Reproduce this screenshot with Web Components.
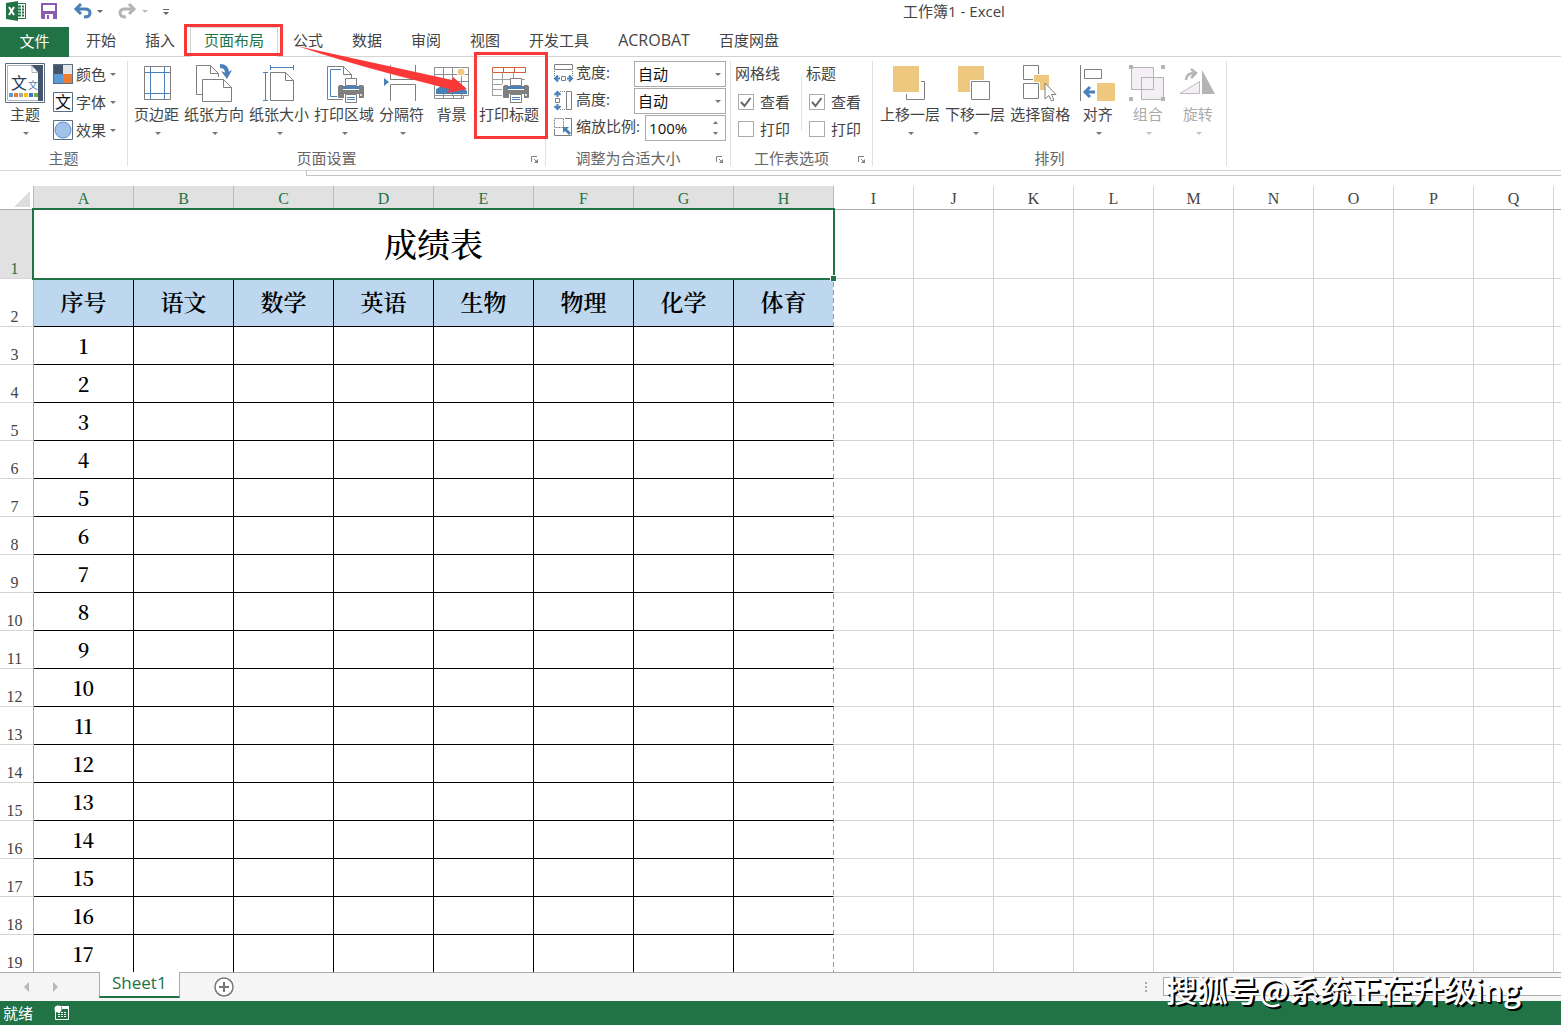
<!DOCTYPE html>
<html lang="zh-CN">
<head>
<meta charset="utf-8">
<title>工作簿1 - Excel</title>
<style>
html,body{margin:0;height:100%}
body{font:15px/20px "Open Sans","Noto Sans CJK SC",sans-serif;color:#444;background:#fff;overflow:hidden}
</style>
</head>
<body>
<excel-app></excel-app>
<script>
const define = (name, css, html, setup) => customElements.define(name, class extends HTMLElement {
  connectedCallback() {
    if (this.shadowRoot) return;
    const root = this.attachShadow({ mode: 'open' });
    root.innerHTML = `<style>*{box-sizing:border-box}button,input,select{font:inherit;color:inherit;margin:0}button{border:0;background:none;padding:0;cursor:default;white-space:nowrap}${css}</style>` +
      (typeof html === 'function' ? html(this) : html);
    if (setup) setup(this, root);
  }
});

const G = '#7f7f7f', B = '#4a80b8', Y = '#edc87e';
const line = (d, c = G, extra = '') => `<path d="${d}" fill="none" stroke="${c}" ${extra}/>`;
const fill = (d, c) => `<path d="${d}" fill="${c}"/>`;
const printer = `<path d="M13 21h28v14h-5v6h-17v-6h-6z" fill="#fff"/>
  <path d="M16 22h22q2 0 2 2v10q0 1-1 1H15q-1 0-1-1V24q0-2 2-2z" fill="${G}"/>
  <path d="M19 21h16v6H19z" fill="#fff"/><path d="M19 23h16v3H19z" fill="${B}"/>
  <path d="M21.500 15.500h11v7h-11z" fill="#fff" stroke="${G}"/><path d="M20 31h15v4H20z" fill="#fff"/>
  <path d="M21.500 31.500h11v8h-11z" fill="#fff" stroke="${G}"/>${line('M23 34.500h8M23 36.500h8', B)}
  <circle cx="37" cy="32" r="1" fill="#fff"/>`;
const page = (x, y, r, b) => `<path d="M${x} ${y}H${r - 8}L${r} ${y + 8}V${b}H${x}Z" fill="#fff" stroke="${G}"/>` + line(`M${r - 8} ${y}V${y + 8}H${r}`);

const ICONS = {
  theme: [40, 40, `<path d="M.5.5h39v39H.5z" fill="#fff" stroke="#5b6b82"/><path d="M2.500 37.500V2.500H27l7 8v27z" fill="#fff" stroke="#aab4c2"/><path d="M26 2H38V38H33V10Z" fill="#44546a"/><path d="M27 3V9.500H33Z" fill="#fff" stroke="#aab4c2"/>
    <text x="6" y="26" font-size="16" fill="#2c405c">文</text><text x="23" y="26" font-size="10" fill="${B}">文</text>
    ${['#5b9bd5', '#ed7d31', '#a5a5a5', '#ffc000', '#4472c4', '#70ad47'].map((c, i) => `<path d="M${4 + i * 5} 30h4v4h-4z" fill="${c}"/>`).join('')}`],
  colors: [20, 20, `<path d="M0 0h20v20H0z" fill="#5b6b82"/><path d="M1 1h9v9H1z" fill="#44546a"/><path d="M10 1h9v9h-9z" fill="#e7e6e6"/><path d="M1 10h9v9H1z" fill="#5b9bd5"/><path d="M10 10h9v9h-9z" fill="#ed7d31"/>`],
  fonts: [20, 20, `<path d="M.5.5h19v19H.5z" fill="#fff" stroke="#5b6b82"/><text x="2" y="16" font-size="16" fill="#111">文</text>`],
  effects: [20, 20, `<path d="M.5.5h19v19H.5z" fill="#fff" stroke="#5b6b82"/><circle cx="10" cy="10" r="8" fill="#a3c2ea" stroke="#5b93d3"/>`],
  margins: [41, 40, line('M8.500 3.500h26v33h-26z') + line('M14.500 4v32M28.500 4v32M9 9.500h25M9 30.500h25', B)],
  orient: [40, 40, line('M8 31.500H2.500V2.500H16.500L24.500 10.500V14M16.500 2.500V10.500H24.500') + page(8.5, 16.5, 37.5, 38.5) + line('M26 3Q33 3 33 10', B, 'stroke-width="4"') + fill('M27 8L32 10L38 7L33 16Z', B)],
  size: [40, 40, page(11.5, 9.5, 34.5, 37.5) + line('M11.500 2v5M34.500 2v5M12 4.500h22M4 9.500h5M4 37.500h5M6.500 10v27', B)],
  area: [40, 40, page(3.5, 3.5, 27.5, 36.5) + line('M17 6.500H6.500V33.500H14', B) + printer],
  breaks: [41, 40, line('M9.500 2V16.500H34.500V2M9.500 38V21.500H34.500V38') + fill('M3 15L8 19L3 23Z', B)],
  backg: [41, 40, line('M3.500 4.500h34v28h-34zM12.500 5v28M21.500 5v28M30.500 5v30M4 11.500h34M4 18.500h34M3.500 32.500v3h29v-3M12.500 32v3M22.500 32v3', '#8e8e8e') + fill('M5 31V26Q11 24 12 18Q16 15 20 18Q22 15 26 19L36 28V31Z', B) + `<circle cx="30" cy="9" r="4" fill="${Y}" stroke="#fff"/>`],
  titles: [40, 40, line('M3.500 10V33M13.500 10V33M24.500 10V16M4 16.500h32M4 21.500h18M4 26.500h12M4 32.500h12', '#a0a0a0') + line('M3.500 9.500V4.500H36.500V9.500ZM14.500 5v4M25.500 5v4', '#d0603c') + printer],
  forward: [40, 40, line('M16.500 18.500h18v18h-18z') + `<path d="M2 2h29v29H2z" fill="#fff"/>` + fill('M3 3h26v26H3z', Y)],
  backward: [40, 40, fill('M3 3h26v26H3z', Y) + `<path d="M15 17h21v21H15z" fill="#fff"/>` + line('M16.500 18.500h18v18h-18z')],
  pane: [40, 40, line('M3.500 2.500h15v14h-15z') + `<path d="M13 11h17v17H13z" fill="#fff"/>` + fill('M14 12h15v15H14z', Y) + `<path d="M2 19h18v18H2z" fill="#fff"/>` + line('M3.500 20.500h15v15h-15z') + `<path d="M25 20V36L29 32.500L31.500 38L34 37L31.500 31.500H36Z" fill="#fff" stroke="${G}"/>`],
  align: [41, 40, line('M3.500 2V38M7.500 6.500h17v9h-17z') + fill('M20 20h18v18H20z', Y) + line('M18 29H8M13 24L8 29L13 34', B, 'stroke-width="3"')],
  group: [41, 40, `<path d="M4.500 4.500h22v22h-22zM14.500 14.500h22v22h-22z" fill="#f4eff4" stroke="#b4b4b4"/>` + line('M14.500 26V14.500H26M26.500 14V26.500H14', '#b4b4b4') + fill('M2 2h4v4H2zM34 2h4v4h-4zM2 34h4v4H2zM34 34h4v4h-4z', '#b4b4b4')],
  rotate: [41, 40, `<path d="M3 30.500H22.500V18.500Z" fill="#f4eff4" stroke="#bbb"/>` + fill('M25 7V31H38Z', '#b4b4b4') + line('M9 17Q9 10 18 10M14 6L19 10L14 15', '#b4b4b4', 'stroke-width="2.5"')],
  width: [20, 20, line('M1.500 1.500h18v5h-18z') + line('M1.500 8v6M19.500 8v6', G, 'stroke-dasharray="1 1"') + line('M8.500 13.500h4v4h-4z') + line('M7 15.500H2M5 12.500L2 15.500L5 18.500M14 15.500H19M16 12.500L19 15.500L16 18.500', B, 'stroke-width="2"')],
  height: [20, 20, line('M13.500 1.500h5v18h-5z') + line('M7 1.500h5M7 19.500h5', G, 'stroke-dasharray="1 1"') + line('M2.500 8.500h4v4h-4z') + line('M4.500 7V2M1.500 5L4.500 2L7.500 5M4.500 14V19M1.500 16L4.500 19L7.500 16', B, 'stroke-width="2"')],
  scale: [20, 20, line('M1.500 1.500h9v9h-9z', G, 'stroke-dasharray="2 1"') + line('M12 1.500H18.500V18.500H1.500V12') + fill('M10 10H16L14 12L18 16L16 18L12 14L10 16Z', B)],
  caret: [6, 3, fill('M0 0H6L3 3Z', 'currentColor')],
  up: [5, 3, fill('M0 3H5L2.500 0Z', 'currentColor')],
  down: [5, 3, fill('M0 0H5L2.500 3Z', 'currentColor')],
  launch: [8, 8, line('M.5 6V.5H6M3 3L6 6', G) + fill('M7 3V7H3Z', G)],
  tick: [16, 16, line('M3 8L6.500 12L12.500 4', '#666', 'stroke-width="2"')],
  excel: [20, 20, `<path d="M11 2.500h8.500v15H11z" fill="#fff" stroke="#217346"/>` + line('M12 5.500h6M12 8.500h6M12 11.500h6M12 14.500h6', '#217346', 'stroke-width="2" stroke-dasharray="3 1"') + fill('M0 2L12 0V20L0 18Z', '#217346') + line('M3 6L8 14M8 6L3 14', '#fff', 'stroke-width="2"')],
  save: [16, 16, fill('M0 0H16V16H1L0 15Z', '#8a5bb0') + fill('M2 2h12v6H2zM4 11h8v5H4z', '#fff') + fill('M6 12h2v4H6z', '#8a5bb0')],
  undo: [19, 16, line('M3 6H12Q17 6 17 10Q17 14 11 14', B, 'stroke-width="3"') + line('M8 1L3 6L8 11', B, 'stroke-width="3"')],
  redo: [19, 16, line('M16 6H7Q2 6 2 10Q2 14 8 14', '#b4b4b4', 'stroke-width="3"') + line('M11 1L16 6L11 11', '#b4b4b4', 'stroke-width="3"')],
  custom: [6, 7, line('M0 1.500H6', '#666') + fill('M0 4H6L3 7Z', '#666')],
  prev: [5, 10, fill('M5 0V10L0 5Z', '#b8b8b8')],
  next: [5, 10, fill('M0 0V10L5 5Z', '#b8b8b8')],
  add: [20, 20, `<circle cx="10" cy="10" r="9" fill="#fff" stroke="#777" stroke-width="1.500"/>` + line('M10 5V15M5 10H15', '#777', 'stroke-width="2"')],
  corner: [16, 16, fill('M16 0V16H0Z', '#ddd')],
  macro: [16, 16, line('M1.500 5V14.500H14.500V1.500H6', '#fff') + fill('M8 1H15V4H8Z', '#fff') + line('M4 7.500h9M4 9.500h9M4 11.500h9', '#fff', 'stroke-dasharray="2 1"') + '<circle cx="4" cy="4" r="3.500" fill="#fff"/>']
};
define('x-icon', ':host{display:block;flex:none}svg{display:block;overflow:visible;font-family:"Noto Sans CJK SC",sans-serif}', el => {
  const [w, h, art] = ICONS[el.getAttribute('name')];
  return `<svg width="${w}" height="${h}" viewBox="0 0 ${w} ${h}" aria-hidden="true">${art}</svg>`;
});

define('title-bar', `:host{display:flex;height:27px;color:#444}
  nav{display:flex;align-items:center;height:22px;padding-left:6px}
  button{display:flex;align-items:center}.save{margin-left:15px}.undo{margin-left:16px}.c{margin-left:5px;color:#666}.redo{margin-left:15px}.off{color:#bbb}.last{margin-left:15px}
  h1{flex:1;margin:0 0 0 178px;font:inherit;line-height:22px;text-align:center}`,
  `<nav><x-icon name="excel"></x-icon><button class="save" aria-label="保存"><x-icon name="save"></x-icon></button>
  <button class="undo" aria-label="撤消"><x-icon name="undo"></x-icon></button><button class="c" aria-label="撤消列表"><x-icon name="caret"></x-icon></button>
  <button class="redo" aria-label="恢复"><x-icon name="redo"></x-icon></button><button class="c off" aria-label="恢复列表"><x-icon name="caret"></x-icon></button>
  <button class="last" aria-label="自定义"><x-icon name="custom"></x-icon></button></nav><h1>工作簿1 - Excel</h1>`);

define('tab-strip', `:host{display:flex;height:30px;gap:1px;border-bottom:1px solid #d4d4d4}
  button{padding:0 13px 4px;border:1px solid transparent;border-bottom:0;line-height:24px;height:29px}
  .file{background:#217346;color:#fff;width:69px;height:30px;margin-right:2px;padding:0 0 4px}
  .on{background:#fff;border-color:#d4d4d4;color:#217346;height:30px;padding-bottom:5px}.latin{font-size:16px}`,
  `<button class="file">文件</button>` + ['开始', '插入', '页面布局', '公式', '数据', '审阅', '视图', '开发工具', 'ACROBAT', '百度网盘'].map(t => `<button class="${t === '页面布局' ? 'on' : t === 'ACROBAT' ? 'latin' : ''}">${t}</button>`).join(''));

define('ribbon-group', `:host{display:flex;flex-direction:column;border-right:1px solid #e1e1e1;height:105px}
  .body{display:flex;flex:1;padding:0 4px}footer{display:flex;height:16px;line-height:16px;color:#666}
  span{flex:1;text-align:center}button{width:20px;display:flex;align-items:center;justify-content:center;padding-top:4px}`,
  el => `<div class="body"><slot></slot></div><footer><span>${el.getAttribute('label')}</span>${el.hasAttribute('launcher') ? '<button aria-label="更多设置"><x-icon name="launch"></x-icon></button>' : ''}</footer>`);

define('big-button', `:host{display:block;margin-top:2px;min-width:49px}:host(.slim){min-width:44px}
  button{display:flex;flex-direction:column;align-items:center;width:100%;padding:0 2px;line-height:22px}
  .c{height:16px;display:flex;align-items:center;padding-left:2px;color:#777}:host([off]){color:#aaa}:host([off]) .c{color:#c4c4c4}`,
  el => `<button${el.hasAttribute('off') ? ' disabled' : ''}><x-icon name="${el.getAttribute('icon')}"></x-icon><span>${el.getAttribute('label')}</span>${el.hasAttribute('plain') ? '' : '<span class="c"><x-icon name="caret"></x-icon></span>'}</button>`);

define('small-button', `:host{display:block}button{display:flex;align-items:center;height:28px;padding-bottom:2px}span{margin:0 4px 0 3px}.c{color:#777}`,
  el => `<button><x-icon name="${el.getAttribute('icon')}"></x-icon><span>${el.getAttribute('label')}</span><x-icon class="c" name="caret"></x-icon></button>`);

define('fit-options', `:host{display:flex;flex-direction:column;padding-left:3px}
  .row{display:flex;align-items:flex-start;height:27px}.row>x-icon{margin-top:2px}label{margin:0 5px 0 3px;line-height:23px}
  .box{display:grid;margin-left:auto;width:92px;height:26px;border:1px solid #ababab;background:#fff;color:#111}
  .box>*{grid-area:1/1}.box>x-icon{justify-self:end;align-self:center;margin-right:4px;color:#777;pointer-events:none}
  select,input{appearance:none;border:0;background:none;padding:0 3px;width:100%;outline:0;min-width:0;height:24px}
  .num{width:81px;margin-left:0}.spin{justify-self:end;display:flex;flex-direction:column;justify-content:space-evenly;padding-right:7px;color:#777}.spin button{height:10px;display:flex;align-items:center}`,
  `<div class="row"><x-icon name="width"></x-icon><label for="w">宽度:</label><div class="box"><select id="w"><option>自动</option></select><x-icon name="caret"></x-icon></div></div>
   <div class="row"><x-icon name="height"></x-icon><label for="h">高度:</label><div class="box"><select id="h"><option>自动</option></select><x-icon name="caret"></x-icon></div></div>
   <div class="row"><x-icon name="scale"></x-icon><label for="s">缩放比例:</label><div class="box num"><input id="s" value="100%"><div class="spin"><button aria-label="增大"><x-icon name="up"></x-icon></button><button aria-label="减小"><x-icon name="down"></x-icon></button></div></div></div>`);

define('sheet-options', `:host{display:flex;padding-right:7px}fieldset{border:0;margin:0;padding:0;min-width:0}legend{padding:0;height:27px;line-height:25px}
  .div{width:1px;height:56px;margin:14px 4px 0 11px;background:#e1e1e1}
  label{display:flex;align-items:center;height:27px;padding-left:3px}i{display:grid;width:16px;height:16px;margin-right:6px}i>*{grid-area:1/1;pointer-events:none}
  input{appearance:none;width:16px;height:16px;border:1px solid #ababab;background:#fff;pointer-events:auto}x-icon{visibility:hidden}input:checked+x-icon{visibility:visible}`,
  ['网格线', '标题'].map(t => `<fieldset><legend>${t}</legend><label><i><input type="checkbox" checked><x-icon name="tick"></x-icon></i>查看</label><label><i><input type="checkbox"><x-icon name="tick"></x-icon></i>打印</label></fieldset>`).join('<div class="div"></div>'));

define('page-ribbon', `:host{display:flex;padding:4px 0;border-bottom:1px solid #d4d4d4}
  .row{display:flex;gap:1px}.theme{padding-right:7px}.slim{margin:2px 6px 0 -1px}.small{display:flex;flex-direction:column}.fwd{padding-left:1px}`,
  `<ribbon-group label="主题"><big-button class="slim" icon="theme" label="主题"></big-button><div class="small theme"><small-button icon="colors" label="颜色"></small-button><small-button icon="fonts" label="字体"></small-button><small-button icon="effects" label="效果"></small-button></div></ribbon-group>
  <ribbon-group label="页面设置" launcher><div class="row"><big-button icon="margins" label="页边距"></big-button><big-button icon="orient" label="纸张方向"></big-button><big-button icon="size" label="纸张大小"></big-button><big-button icon="area" label="打印区域"></big-button><big-button icon="breaks" label="分隔符"></big-button><big-button plain icon="backg" label="背景"></big-button><big-button plain icon="titles" label="打印标题"></big-button></div></ribbon-group>
  <ribbon-group label="调整为合适大小" launcher><fit-options></fit-options></ribbon-group>
  <ribbon-group label="工作表选项" launcher><sheet-options></sheet-options></ribbon-group>
  <ribbon-group label="排列"><div class="row fwd"><big-button icon="forward" label="上移一层"></big-button><big-button icon="backward" label="下移一层"></big-button><big-button plain icon="pane" label="选择窗格"></big-button><big-button icon="align" label="对齐"></big-button><big-button off icon="group" label="组合"></big-button><big-button off icon="rotate" label="旋转"></big-button></div></ribbon-group>`);

const cols = [...'ABCDEFGHIJKLMNOPQ'], subjects = ['序号', '语文', '数学', '英语', '生物', '物理', '化学', '体育'];
const blanks = n => '<td></td>'.repeat(n);
define('sheet-grid', `:host{display:block;flex:1;min-height:0;overflow:hidden;font-family:"Liberation Serif","Noto Serif CJK SC","Noto Sans CJK SC",serif}
  table{table-layout:fixed;width:100%;border-collapse:separate;border-spacing:0;background:repeating-linear-gradient(#999 0 5px,#fff 5px 8px) 833px 0/1px 100% no-repeat}
  col.n{width:34px}col.w{width:100px}col.d{width:80px}
  th,td{padding:0;overflow:hidden;border-right:1px solid #d4d4d4;border-bottom:1px solid #d4d4d4;font-size:16px;font-weight:400;text-align:center}
  thead th{height:24px;line-height:20px;padding-top:3px;border-bottom-color:#ababab;background:#fff}thead th.sel{background:#e1e1e1;border-right-color:#bbb;color:#217346}
  thead th:first-child{border-right-color:#bbb}thead x-icon{margin-left:14px}
  tbody th{vertical-align:bottom;line-height:18px;border-right-color:#ababab;padding-right:4px}
  tr>*:last-child{border-right:0}
  .r1{height:69px}.r2{height:48px}.r{height:38px}
  .r1 th{background:#e1e1e1;color:#217346}
  .title{position:relative;overflow:visible;background:#fff;font-size:33px;font-weight:500;color:#000;padding-top:4px}
  .title::before{content:"";position:absolute;inset:-2px;border:2px solid #217346}
  .title::after{content:"";position:absolute;right:-3px;bottom:-3px;width:5px;height:5px;background:#217346;border:1px solid #fff;border-width:1px 0 0 1px;box-sizing:content-box}
  .k td:nth-child(-n+9){border-color:#000;color:#000}.k td:nth-child(9){border-right-color:transparent;background-clip:padding-box}
  .r2 td:nth-child(-n+9){background-color:#bdd7ee;font-size:23px;font-weight:600;padding-top:3px}
  .r td:nth-child(2){font:600 20px/30px "Noto Serif CJK SC","Liberation Serif",serif}`,
  `<table><colgroup><col class="n">${'<col class="w">'.repeat(8)}${'<col class="d">'.repeat(9)}<col></colgroup>
  <thead><tr><th><x-icon name="corner"></x-icon></th>${cols.map((c, i) => `<th${i < 8 ? ' class="sel"' : ''}>${c}</th>`).join('')}<th></th></tr></thead>
  <tbody><tr class="r1"><th>1</th><td class="title" colspan="8">成绩表</td>${blanks(10)}</tr>
  <tr class="r2 k"><th>2</th>${subjects.map(s => `<td>${s}</td>`).join('')}${blanks(10)}</tr>
  ${Array.from({ length: 17 }, (_, i) => `<tr class="r k"><th>${i + 3}</th><td>${i + 1}</td>${blanks(17)}</tr>`).join('')}</tbody></table>`);

define('sheet-bar', `:host{display:flex;height:29px;flex:none;background:#f5f5f5;border-top:1px solid #ababab;align-items:flex-start}
  nav{display:flex;gap:24px;padding:9px 0 0 24px;width:99px}
  .tab{margin-top:-1px;height:26px;padding:0 12px 2px;background:#fff;border:1px solid #ababab;border-width:0 1px;border-bottom:2px solid #217346;color:#217346;font-size:17px;line-height:20px}
  .add{margin:4px 0 0 34px}.dots{margin:9px 0 0 auto;width:2px;height:10px;background:repeating-linear-gradient(#aaa 0 2px,transparent 2px 4px)}
  .scroll{margin:4px 0 0 16px;width:398px;height:19px;border:1px solid #ababab;border-right:0;background:#fff}`,
  `<nav><button aria-label="上一张"><x-icon name="prev"></x-icon></button><button aria-label="下一张"><x-icon name="next"></x-icon></button></nav><button class="tab">Sheet1</button><button class="add" aria-label="新工作表"><x-icon name="add"></x-icon></button><div class="dots"></div><div class="scroll"></div>`);

define('status-bar', ':host{display:flex;align-items:center;gap:21px;height:24px;flex:none;background:#217346;color:#fff;padding-left:3px}', '<span>就绪</span><x-icon name="macro"></x-icon>');

define('red-marks', ':host{position:absolute;left:0;top:0;pointer-events:none}svg{display:block}',
  `<svg width="560" height="150" aria-hidden="true"><path d="M185.500 25.500h96v29h-96zM475.500 53.500h71v84h-71z" fill="none" stroke="#fb3838" stroke-width="3"/><path d="M297 46L452 80L453 77L467 89L448 93L449 89L395 75Q345 62 297 46Z" fill="#fb3838"/></svg>`);

define('water-mark', ':host{position:absolute;right:40px;bottom:14px;font:500 31px/44px "Noto Sans CJK SC",sans-serif;color:#fff;text-shadow:1px 1px #000,2px 2px #000;white-space:nowrap;pointer-events:none}', '<slot></slot>');

define('excel-app', `:host{display:flex;flex-direction:column;height:100vh;position:relative;background:#fff;overflow:hidden}
  .formula{height:5px;flex:none;margin:0 0 10px 306px;border:1px solid #c6c6c6;border-width:0 0 1px 1px}`,
  `<title-bar></title-bar><tab-strip></tab-strip><page-ribbon></page-ribbon><div class="formula"></div><sheet-grid></sheet-grid><sheet-bar></sheet-bar><status-bar></status-bar><red-marks></red-marks><water-mark>搜狐号@系统正在升级ing</water-mark>`);
</script>
</body>
</html>
